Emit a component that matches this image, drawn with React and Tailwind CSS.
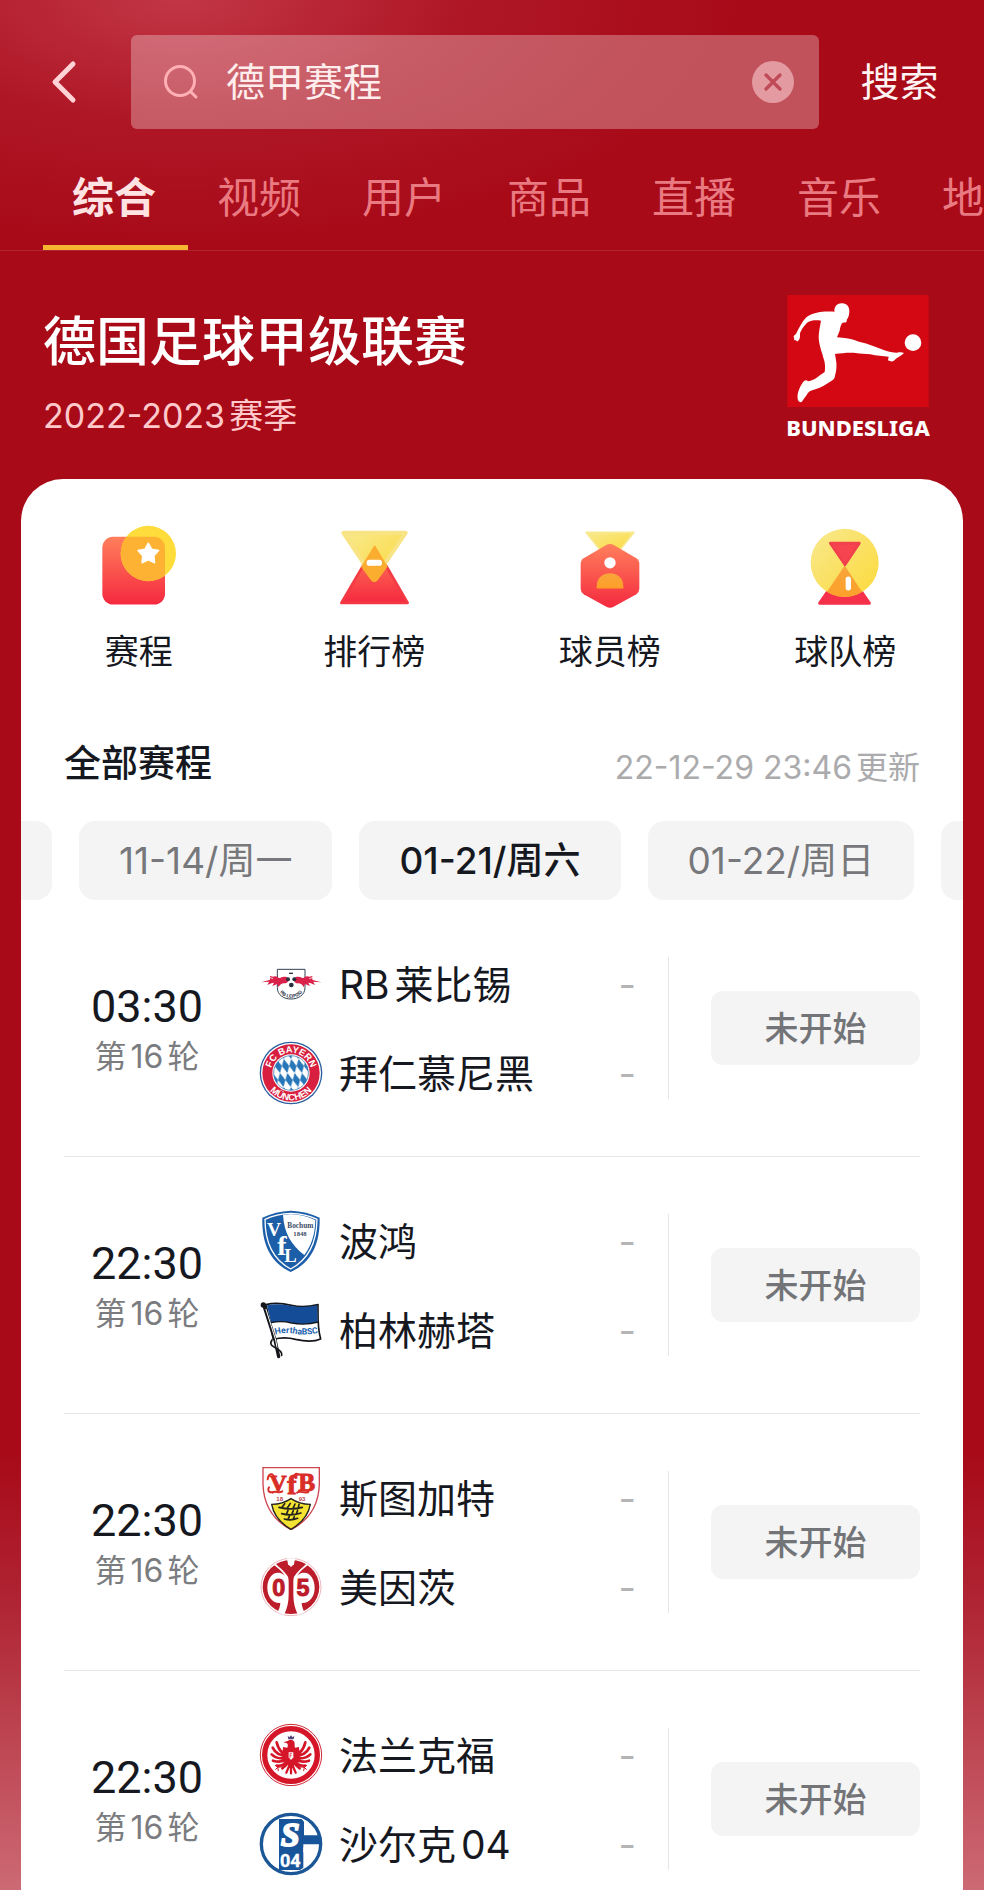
import { useState } from "react";

const tabs = ["综合", "视频", "用户", "商品", "直播", "音乐", "地"];
const dates = ["11-14/周一", "01-21/周六", "01-22/周日"];

const matches = [
  { time: "03:30", home: "RB莱比锡", away: "拜仁慕尼黑", HomeLogo: LeipzigLogo, AwayLogo: BayernLogo },
  { time: "22:30", home: "波鸿", away: "柏林赫塔", HomeLogo: BochumLogo, AwayLogo: HerthaLogo },
  { time: "22:30", home: "斯图加特", away: "美因茨", HomeLogo: StuttgartLogo, AwayLogo: MainzLogo },
  { time: "22:30", home: "法兰克福", away: "沙尔克04", HomeLogo: FrankfurtLogo, AwayLogo: SchalkeLogo },
];

function BackIcon() {
  return (
    <svg aria-hidden="true" className="h-[44px] w-[28px]" viewBox="0 0 28 44" fill="none" stroke="#ffd3d6" strokeWidth="5" strokeLinecap="round" strokeLinejoin="round">
      <path d="M23 4 5 22l18 18" />
    </svg>
  );
}

function SearchIcon() {
  return (
    <svg aria-hidden="true" className="h-9 w-9" viewBox="0 0 36 36" fill="none" stroke="#ffb0b5" strokeWidth="3" strokeLinecap="round">
      <circle cx="17" cy="17" r="14.5" />
      <path d="m28 28 5 5" />
    </svg>
  );
}

function ClearIcon() {
  return (
    <svg aria-hidden="true" className="h-[42px] w-[42px]" viewBox="0 0 42 42">
      <circle cx="21" cy="21" r="21" fill="#e39ba1" />
      <path d="m14 14 14 14M28 14 14 28" stroke="#c04a57" strokeWidth="3.4" strokeLinecap="round" />
    </svg>
  );
}

function LeagueLogo() {
  return (
    <div className="flex w-[142px] flex-col items-center gap-2">
      <svg aria-hidden="true" className="h-[112px] w-[142px]" viewBox="51 45 424 336">
        <path fill="#d40813" d="M51 45h424v336H51z" />
        <g fill="#fff">
          <circle cx="428" cy="188" r="25" />
          <path d="M192 94c0-16 10-25 24-24 14 1 22 11 21 26-1 12-4 18-7 22l-2 9c-6 1-10 1-13 3-4 7-6 14-7 22l-8 20c22 1 45 4 66 13 30 7 52 16 76 26 12 4 26 7 38 7 8-1 14-2 21 1-9 9-19 13-25 18-6 7-11 10-23 4l2-11c-18-1-36-3-55-7-14-1-30-2-44-4-21-2-42 1-62 3 3 18 7 35 3 52-4 17-3 24-13 28-16 10-31 21-49 26-14 3-22 8-26 17l-13 18c-3 7-13 3-14-7-2-16 5-32 14-46 5-8 11-12 17-6 20-3 33-17 50-28 2-13 2-28-4-43-6-22-14-41-14-64 1-16 4-31 7-47-15-2-28-2-42 6-5 6-9 10-13 16l-7 13c-3 7 2 15-5 24-3 4-5 5-8 0-6 0-7-2-5-7-4-3-3-7 5-12 9-17 17-36 31-50 17-15 52-20 86-17Z" />
        </g>
      </svg>
      <span className="text-[22px] leading-6 font-extrabold text-white [font-family:'Noto_Sans','Open_Sans',sans-serif]">
        BUNDESLIGA
      </span>
    </div>
  );
}

function Gradients({ id }) {
  return (
    <defs>
      <linearGradient id={`${id}-red`} x1="0" y1="0" x2="0" y2="1">
        <stop offset="0" stopColor="#ff7f5c" />
        <stop offset="1" stopColor="#f5293f" />
      </linearGradient>
      <linearGradient id={`${id}-yellow`} x1="0" y1="0" x2="1" y2="1">
        <stop offset="0" stopColor="#f8e98e" />
        <stop offset="1" stopColor="#fcd93a" />
      </linearGradient>
      <linearGradient id={`${id}-orange`} x1="0" y1="0" x2="0" y2="1">
        <stop offset="0" stopColor="#f8a53c" />
        <stop offset="1" stopColor="#fd9f26" />
      </linearGradient>
    </defs>
  );
}

function ScheduleIcon() {
  return (
    <svg aria-hidden="true" className="h-[87px] w-20" viewBox="237 130 240 260">
      <Gradients id="schedule" />
      <rect x="247" y="171" width="188" height="203" rx="32" fill="url(#schedule-red)" />
      <circle cx="385" cy="221" r="83" fill="#fddc3c" />
      <clipPath id="schedule-clip">
        <rect x="247" y="171" width="188" height="203" rx="32" />
      </clipPath>
      <circle cx="385" cy="221" r="83" fill="#fdb233" clipPath="url(#schedule-clip)" />
      <path d="m385 190 10 18 21 4-14 16 2 21-19-9-19 9 2-21-14-16 21-4Z" fill="#fff" stroke="#fff" strokeWidth="4" strokeLinejoin="round" />
    </svg>
  );
}

function RankingIcon() {
  return (
    <svg aria-hidden="true" className="h-[87px] w-20" viewBox="942 130 240 260">
      <Gradients id="ranking" />
      <path d="M1064 198 964 369h199Z" fill="url(#ranking-red)" stroke="#f43a45" strokeWidth="8" strokeLinejoin="round" />
      <path d="M970 159h187l-94 139Z" fill="url(#ranking-yellow)" stroke="#f8e484" strokeWidth="12" strokeLinejoin="round" />
      <path d="m1064 200-38 61 30 40q7 6 14 0l30-41Z" fill="#fbad2f" stroke="#fbad2f" strokeWidth="5" strokeLinejoin="round" />
      <rect x="1040" y="240" width="46" height="18" rx="8" fill="#fff" />
    </svg>
  );
}

function PlayerIcon() {
  return (
    <svg aria-hidden="true" className="h-[87px] w-20" viewBox="209 130 240 260">
      <Gradients id="player" />
      <path d="M258 158h142l-45 57h-52Z" fill="url(#player-yellow)" stroke="#f8e98e" strokeWidth="6" strokeLinejoin="round" />
      <path d="M319 195q10-5 20 0l69 40q9 6 9 17v75q0 10-9 16l-68 38q-11 6-22 0l-68-38q-9-6-9-16v-75q0-11 9-17Z" fill="url(#player-red)" />
      <circle cx="329" cy="249" r="17" fill="#fff" />
      <path d="M289 326v-7c0-52 80-52 80 0v7Z" fill="url(#player-orange)" />
    </svg>
  );
}

function TeamIcon() {
  return (
    <svg aria-hidden="true" className="h-[87px] w-20" viewBox="916 130 240 260">
      <Gradients id="team" />
      <path d="m1035 262-75 108h149Z" fill="#f5304a" stroke="#f5304a" strokeWidth="9" strokeLinejoin="round" />
      <circle cx="1035" cy="249" r="102" fill="url(#team-yellow)" />
      <clipPath id="team-clip">
        <circle cx="1035" cy="249" r="102" />
      </clipPath>
      <path d="m1035 257-75 112h149Z" fill="url(#team-orange)" clipPath="url(#team-clip)" />
      <path d="M992 190h87l-43 65Z" fill="#f6454e" stroke="#f0414c" strokeWidth="8" strokeLinejoin="round" />
      <rect x="1038" y="290" width="16" height="42" rx="8" fill="#fff" />
    </svg>
  );
}

function LeipzigLogo() {
  return (
    <svg aria-hidden="true" className="h-16 w-16" viewBox="58 34 192 192">
      <path d="M113 86h83v55c0 22-20 34-42 34s-41-12-41-34Z" fill="#fff" stroke="#334155" strokeWidth="3" />
      <path id="leipzig-arc" d="M117 138c0 44 75 44 75 0" fill="none" />
      <text fontSize="14" fontWeight="700" fill="#27303f" textAnchor="middle" fontFamily="Liberation Sans, sans-serif">
        <textPath href="#leipzig-arc" startOffset="50%">RB LEIPZIG</textPath>
      </text>
      <g fill="#d9214a">
        <path d="M148 114c-8-8-18-7-27-2-6 1-8-5-15-5-6 0-7 4-6 8l-9-3v5c-9 4-17 4-29 8l26-2c-2 4-3 7-5 10 8-4 13-7 20-7l-5 10 15-6 4 10c3-8 9-12 17-12 6 0 11-2 14-14Z" />
        <path d="M161 114c8-8 18-7 27-2 6 1 8-5 15-5 6 0 7 4 6 8l9-3v5c9 4 17 4 29 8l-26-2c2 4 3 7 5 10-8-4-13-7-20-7l5 10-15-6-4 10c-3-8-9-12-17-12-6 0-11-2-14-14Z" />
        <path d="m91 106 12 3-2 4-10-3ZM218 106l-12 3 2 4 10-3Z" />
      </g>
      <circle cx="145" cy="116" r="6" fill="#27303f" />
      <circle cx="164" cy="116" r="6" fill="#27303f" />
      <circle cx="155" cy="133" r="7" fill="#27303f" />
      <path d="M148 98h12" stroke="#27303f" strokeWidth="4" />
    </svg>
  );
}

function BayernLogo() {
  return (
    <svg aria-hidden="true" className="h-16 w-16" viewBox="58 301 192 192">
      <defs>
        <pattern id="bavaria" width="22" height="42" patternUnits="userSpaceOnUse" patternTransform="translate(154 397) skewX(14)">
          <path fill="#fff" d="M0 0h22v42H0z" />
          <path fill="#2676b8" d="m11 0 11 21-11 21L0 21Z" />
        </pattern>
        <path id="bayern-top" d="M93 397a61 61 0 0 1 122 0" />
        <path id="bayern-bottom" d="M72 397a82 82 0 0 0 164 0" />
      </defs>
      <circle cx="154" cy="397" r="94" fill="#2b5f9e" />
      <circle cx="154" cy="397" r="90" fill="#fff" />
      <circle cx="154" cy="397" r="86" fill="#d81f3f" />
      <circle cx="154" cy="397" r="56" fill="#fff" />
      <circle cx="154" cy="397" r="52" fill="url(#bavaria)" stroke="#2b6cab" strokeWidth="2" />
      <g fill="#fff" fontSize="28" fontWeight="700" textAnchor="middle" fontFamily="Liberation Sans, sans-serif">
        <text>
          <textPath href="#bayern-top" startOffset="50%">FC BAYERN</textPath>
        </text>
        <text>
          <textPath href="#bayern-bottom" startOffset="50%">MÜNCHEN</textPath>
        </text>
      </g>
    </svg>
  );
}

function BochumLogo() {
  return (
    <svg aria-hidden="true" className="h-16 w-16" viewBox="58 54 192 192">
      <path d="M68 80c26-13 55-20 86-21 31 1 60 8 86 21 1 77-23 133-87 163C90 213 66 157 68 80Z" fill="#1c5ea8" />
      <path d="M76 85c23-11 49-17 78-18 29 1 55 7 78 18-1 68-23 120-79 149C98 205 76 153 76 85Z" fill="none" stroke="#fff" strokeWidth="4" />
      <path d="M130 71c38-5 70 2 97 17-1 42-11 74-33 104-40-31-61-66-64-121Z" fill="#fff" />
      <g fill="#fff" fontWeight="700" fontFamily="Liberation Serif, serif">
        <text x="82" y="136" fontSize="58">V</text>
        <text x="113" y="192" fontSize="84">f</text>
        <text x="134" y="214" fontSize="56">L</text>
      </g>
      <g fill="#3c4c67" fontWeight="700" textAnchor="middle" fontFamily="Liberation Serif, serif">
        <text x="182" y="110" fontSize="22">Bochum</text>
        <text x="181" y="135" fontSize="20">1848</text>
      </g>
    </svg>
  );
}

function HerthaLogo() {
  return (
    <svg aria-hidden="true" className="h-16 w-16" viewBox="58 322 192 192">
      <path d="M79 342c29-8 52-4 76 2 26 6 55 4 80-2 0 34-2 70 8 103-25 11-50 7-75 1-22-6-45-6-67 0Z" fill="#fff" stroke="#15171c" strokeWidth="5" strokeLinejoin="round" />
      <path d="M82 344c26-6 49-3 72 2 28 5 52 4 78-2l2 50c-24 7-51 8-78 2-20-4-40-4-62 0Z" fill="#154c98" />
      <path d="M94 396c22-5 42-4 62 1 27 5 54 4 80-3" fill="none" stroke="#15171c" strokeWidth="4" />
      <path id="hertha-arc" d="M107 432c20-6 42-6 62-2 24 3 44 2 75-5" fill="none" />
      <text fontSize="26" fontWeight="700" fill="#1b62ae" fontFamily="Roboto, sans-serif">
        <textPath href="#hertha-arc">HerthaBSC</textPath>
      </text>
      <g fill="none" stroke="#15171c" strokeLinecap="round">
        <path d="m72 342 34 106 11 50" strokeWidth="10" />
        <path d="m79 356 29 92 4 22" stroke="#fff" strokeWidth="3" />
        <path d="M97 448c-10 14 3 20 15 26 9 5 16 10 14 20" strokeWidth="5" />
      </g>
      <circle cx="71" cy="343" r="8" fill="#15171c" />
    </svg>
  );
}

function StuttgartLogo() {
  return (
    <svg aria-hidden="true" className="h-16 w-16" viewBox="58 44 192 192">
      <path d="M70 49h169v50c-2 64-34 110-85 136-50-26-82-72-84-136Z" fill="#fff" stroke="#cf4550" strokeWidth="4" />
      <g fill="#d92d27" stroke="#d92d27" strokeWidth="3" fontWeight="700" fontFamily="Liberation Serif, serif">
        <text x="90" y="120" fontSize="70">V</text>
        <text x="143" y="128" fontSize="84">f</text>
        <text x="176" y="120" fontSize="76">B</text>
      </g>
      <g fill="none" stroke="#d92d27" strokeWidth="6" strokeLinecap="round">
        <path d="M84 84c2-18 16-20 18-8M88 108c-6 8 0 18 10 14M98 124c10-8 18 4 30-4M176 70c-8-6-16 2-8 10M172 124c10-8 20 4 34-2" />
      </g>
      <g fill="#c0444b" fontSize="18" fontWeight="700" fontFamily="Liberation Sans, sans-serif">
        <text x="110" y="149">18</text>
        <text x="177" y="149">93</text>
      </g>
      <path d="M96 159q33 0 58-17 25 17 58 17c-6 33-27 57-58 75-31-18-52-42-58-75Z" fill="#f4e332" stroke="#24231c" strokeWidth="4" />
      <g fill="none" stroke="#24231c" strokeWidth="5" strokeLinecap="round">
        <path d="M118 168q35 9 70 0M126 187q28 8 58-2M134 203q20 6 40-2M127 168l8-11M143 170l9-14M160 171l6-13M176 169l2-10M140 189l5-12M156 190l5-12M170 188l4-11M145 205l4-10M160 205l4-9" />
      </g>
    </svg>
  );
}

function MainzLogo() {
  return (
    <svg aria-hidden="true" className="h-16 w-16" viewBox="58 316 192 192">
      <ellipse cx="154" cy="412" rx="90" ry="86" fill="#fff" stroke="#e3939b" strokeWidth="2" />
      <ellipse cx="154" cy="412" rx="85" ry="81" fill="#bd1c2b" />
      <path d="M142 326h24l-3 18-9 8-9-8Z" fill="#fff" />
      <path d="M108 342c12 12 26 22 36 38 2 4 3 10 3 16v38c0 24-4 42-14 62l-20-8c6-10 8-18 9-28-22 2-39-18-39-46 0-30 18-50 39-44 6 2 10 5 14 9-8-13-19-22-32-32Z" fill="#fff" />
      <path d="M200 342c-12 12-26 22-36 38-2 4-3 10-3 16v38c0 24 4 42 14 62l20-8c-6-10-8-18-9-28 22 2 39-18 39-46 0-30-18-50-39-44-6 2-10 5-14 9 8-13 19-22 32-32Z" fill="#fff" />
      <g fill="#bd1c2b" stroke="#bd1c2b" strokeWidth="3" fontSize="70" fontWeight="700" textAnchor="middle" fontFamily="Liberation Sans, sans-serif">
        <text x="117" y="438">0</text>
        <text x="190" y="438">5</text>
      </g>
    </svg>
  );
}

function FrankfurtLogo() {
  return (
    <svg aria-hidden="true" className="h-16 w-16" viewBox="58 39 192 192">
      <circle cx="154" cy="135" r="92" fill="#fff" stroke="#cf2735" strokeWidth="3" />
      <circle cx="154" cy="135" r="79" fill="#fff" stroke="#d51629" strokeWidth="16" />
      <g fill="none" stroke="#d51629" strokeWidth="8" strokeLinecap="round">
        <path d="M146 133c-20 0-30-16-35-36M144 138c-24 0-38-10-45-25M143 143c-22 5-38-1-47-10M143 148c-16 9-33 7-43 4M143 153c-8 10-19 15-31 14M146 156c-4 8-10 14-18 19" />
        <path d="M162 133c20 0 30-16 35-36M164 138c24 0 38-10 45-25M165 143c22 5 38-1 47-10M165 148c16 9 33 7 43 4M165 153c8 10 19 15 31 14M162 156c4 8 10 14 18 19" />
        <path d="m154 155-14 33M154 155v35M154 155l14 33" strokeWidth="7" />
      </g>
      <g fill="none" stroke="#d51629" strokeWidth="3" strokeLinecap="round">
        <path d="m132 170-18 2-7-6M114 172l-6 6M114 172l2 10M176 170l18 2 7-6M194 172l6 6M194 172l-2 10" />
      </g>
      <path d="M144 93q12-9 20 2c2 8 0 12 2 18l12-2 2 30-13 22-13 8-13-8-13-22 2-30 13 2c2-6 2-10-1-13l-11-3Z" fill="#d51629" />
      <path d="m144 77 5 5 5-6 5 6 5-5-2 11h-16Z" fill="#514078" />
      <path d="M147 127h14v15l-7 8-7-8Z" fill="#fff" />
      <path d="M151 130v14M151 131h6M151 137h5" stroke="#d51629" strokeWidth="2" />
    </svg>
  );
}

function SchalkeLogo() {
  return (
    <svg aria-hidden="true" className="h-16 w-16" viewBox="58 307 192 192">
      <circle cx="154" cy="403" r="89" fill="#fff" stroke="#1b5797" strokeWidth="10" />
      <path d="M118 328h68l7 8v41h50v27h-52v70l-10 7h-63Z" fill="#17549a" />
      <path d="M191 428h16v-15h-16Z" fill="#fff" />
      <g fill="#fff" stroke="#fff" textAnchor="middle" fontWeight="700">
        <text x="152" y="408" fontSize="100" strokeWidth="6" fontStyle="italic" fontFamily="Liberation Serif, serif">S</text>
        <text x="152" y="471" fontSize="54" strokeWidth="1" fontFamily="Roboto, sans-serif">04</text>
      </g>
    </svg>
  );
}

const shortcuts = [
  { label: "赛程", Icon: ScheduleIcon },
  { label: "排行榜", Icon: RankingIcon },
  { label: "球员榜", Icon: PlayerIcon },
  { label: "球队榜", Icon: TeamIcon },
];

function TeamRow({ Logo, name }) {
  return (
    <div className="flex h-[89px] items-center">
      <Logo />
      <span className="ml-4 flex-1 pt-[3px] text-[39px] leading-[48px] whitespace-nowrap text-[#16181f]">{name}</span>
      <span className="text-[38px] leading-[48px] text-[#b4b4b6]">-</span>
    </div>
  );
}

function MatchRow({ match }) {
  return (
    <li className="flex h-[257px] items-center border-b border-[#e6e6e6]">
      <div className="flex w-[166px] shrink-0 flex-col items-center pt-1">
        <span className="text-[45px] leading-[54px] text-[#16181f] [font-family:Roboto,sans-serif]">{match.time}</span>
        <span className="text-[32px] leading-[46px] text-[#7b7c80]">第16轮</span>
      </div>
      <div className="ml-[29px] flex-1">
        <TeamRow Logo={match.HomeLogo} name={match.home} />
        <TeamRow Logo={match.AwayLogo} name={match.away} />
      </div>
      <div className="ml-8 h-[142px] w-px bg-[#e6e6e6]" />
      <button type="button" className="ml-[42px] h-[74px] w-[209px] shrink-0 rounded-xl bg-[#f4f4f4] text-[34px] font-medium text-[#737478]">
        未开始
      </button>
    </li>
  );
}

export default function App() {
  const [query, setQuery] = useState("德甲赛程");
  const [activeTab, setActiveTab] = useState("综合");
  const [activeDate, setActiveDate] = useState("01-21/周六");

  return (
    <main className="flex h-screen flex-col overflow-hidden bg-[#a80a18] bg-[radial-gradient(ellipse_560px_240px_at_180px_0px,#c23646_0%,#b4202f99_50%,transparent_100%),linear-gradient(to_bottom,transparent_77%,#b02534_85%,#cc6a74_100%)] [font-family:Inter,'Noto_Sans_CJK_SC',sans-serif] [text-autospace:normal]">
      <header className="shrink-0">
        <form className="flex items-center pt-[35px]" onSubmit={(event) => event.preventDefault()}>
          <button type="button" aria-label="返回" className="flex w-[131px] shrink-0 justify-start pl-[50px]">
            <BackIcon />
          </button>
          <div className="flex h-[94px] min-w-0 flex-1 items-center rounded-md bg-white/29 pr-[25px] pl-8">
            <SearchIcon />
            <input
              aria-label="搜索内容"
              className="ml-[27px] min-w-0 flex-1 bg-transparent text-[39px] leading-[56px] text-[#ffecec] outline-none"
              value={query}
              onChange={(event) => setQuery(event.target.value)}
            />
            <button type="button" aria-label="清除" onClick={() => setQuery("")}>
              <ClearIcon />
            </button>
          </div>
          <button type="submit" className="w-[165px] shrink-0 pr-1 text-[39px] leading-[56px] text-[#fff2f2]">
            搜索
          </button>
        </form>

        <nav className="mt-[18px] flex overflow-hidden border-b border-white/10 pl-[43px]">
          {tabs.map((tab) => (
            <button
              key={tab}
              type="button"
              onClick={() => setActiveTab(tab)}
              className={`h-[103px] min-w-[145px] shrink-0 border-b-[5px] px-[29px] pt-1 text-left text-[42px] leading-[56px] ${
                activeTab === tab
                  ? "border-[#f6b62f] font-bold text-[#ffe3e3]"
                  : "border-transparent text-[#ea7a82]"
              }`}
            >
              {tab}
            </button>
          ))}
        </nav>
      </header>

      <section className="flex shrink-0 items-start justify-between px-[43px] pt-[44px] pb-[39px]">
        <div className="pt-[13px]">
          <h1 className="text-[53px] leading-[68px] font-medium text-white">德国足球甲级联赛</h1>
          <p className="mt-4 text-[34px] leading-[48px] text-[#ffc9cb]">2022-2023赛季</p>
        </div>
        <div className="pr-3">
          <LeagueLogo />
        </div>
      </section>

      <section className="mx-[21px] shrink-0 rounded-t-[42px] bg-white pt-[44px]">
        <div className="grid grid-cols-4">
          {shortcuts.map(({ label, Icon }) => (
            <button key={label} type="button" className="flex flex-col items-center">
              <Icon />
              <span className="mt-[22px] text-[34px] leading-10 text-[#16181f]">{label}</span>
            </button>
          ))}
        </div>

        <div className="mt-[68px] flex items-center justify-between px-[43px]">
          <h2 className="text-[37px] leading-[48px] font-medium text-[#16181f]">全部赛程</h2>
          <p className="pt-2 text-[32px] leading-10 text-[#ababad]">22-12-29 23:46更新</p>
        </div>

        <div className="mt-[33px] flex h-[79px] gap-[27px] overflow-hidden">
          <span className="w-[31px] shrink-0 rounded-r-2xl bg-[#f4f4f4]" />
          {dates.map((date) => (
            <button
              key={date}
              type="button"
              onClick={() => setActiveDate(date)}
              className={`shrink-0 rounded-2xl bg-[#f4f4f4] px-10 text-[37px] leading-[48px] ${
                activeDate === date ? "font-medium text-[#16181f]" : "text-[#77787c]"
              }`}
            >
              {date}
            </button>
          ))}
          <span className="flex-1 rounded-l-2xl bg-[#f4f4f4]" />
        </div>

        <ul className="px-[43px]">
          {matches.map((match) => (
            <MatchRow key={match.home} match={match} />
          ))}
        </ul>
      </section>
    </main>
  );
}
